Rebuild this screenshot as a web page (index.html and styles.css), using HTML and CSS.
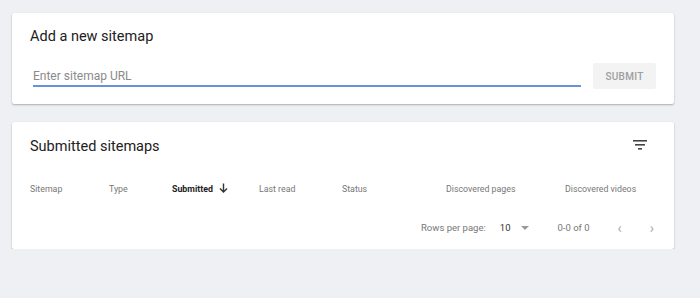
FILE: index.html
```html
<!DOCTYPE html>
<html lang="en">
<head>
  <meta charset="UTF-8">
  <title>Sitemaps</title>
  <link rel="stylesheet" href="styles.css">
</head>
<body>
  <div class="card add-card">
    <h2 class="card-title">Add a new sitemap</h2>
    <div class="add-row">
      <div class="url-field">
        <input class="url-input" type="text" placeholder="Enter sitemap URL">
      </div>
      <button class="submit-btn">SUBMIT</button>
    </div>
  </div>

  <div class="card list-card">
    <div class="list-head">
      <h2 class="card-title">Submitted sitemaps</h2>
      <svg class="filter-icon" width="14" height="10" viewBox="0 0 14 10">
        <rect x="0" y="0" width="14" height="1.6" fill="#444"/>
        <rect x="2" y="4" width="10" height="1.6" fill="#444"/>
        <rect x="5" y="8" width="4" height="1.6" fill="#444"/>
      </svg>
    </div>

    <div class="cols">
      <span class="col c-sitemap">Sitemap</span>
      <span class="col c-type">Type</span>
      <span class="col c-submitted active">Submitted
        <svg class="sort-arrow" width="9" height="10" viewBox="0 0 9 10">
          <path d="M4.5 0.5 V9 M1 5.5 L4.5 9 L8 5.5" stroke="#333" stroke-width="1.4" fill="none"/>
        </svg>
      </span>
      <span class="col c-lastread">Last read</span>
      <span class="col c-status">Status</span>
      <span class="col c-pages">Discovered pages</span>
      <span class="col c-videos">Discovered videos</span>
    </div>

    <div class="pager">
      <span class="rows-label">Rows per page:</span>
      <span class="rows-value">10</span>
      <span class="rows-caret"></span>
      <span class="range">0-0 of 0</span>
      <span class="nav">&lsaquo;</span>
      <span class="nav">&rsaquo;</span>
    </div>
  </div>
</body>
</html>
```

FILE: styles.css
```css
* { box-sizing: border-box; }
body {
  margin: 0;
  padding: 13px 0 0 12px;
  background: #eef0f4;
  font-family: Roboto, 'Liberation Sans', sans-serif;
  color: #222;
}
.card {
  width: 662px;
  background: #fff;
  border-radius: 2px;
  box-shadow: 0 1px 2px rgba(0, 0, 0, 0.28), 0 0 1px rgba(0, 0, 0, 0.08);
}
.card-title {
  margin: 0;
  font-size: 14.5px;
  font-weight: 400;
  color: #212121;
}

/* add a new sitemap */
.add-card {
  height: 91px;
  padding: 15px 18px 0 18px;
}
.add-row {
  display: flex;
  align-items: flex-end;
  margin-top: 18px;
}
.url-field {
  width: 548px;
  margin-left: 3px;
  border-bottom: 2px solid #6a92dc;
}
.url-input {
  display: block;
  width: 100%;
  padding: 0 0 2px 0;
  border: none;
  background: transparent;
  font-family: inherit;
  font-size: 12px;
  outline: none;
}
.url-input::placeholder { color: #8a8a8a; }
.submit-btn {
  margin: 0 0 -2px 12px;
  width: 63px;
  height: 26px;
  border: none;
  border-radius: 2px;
  background: #f3f3f3;
  color: #9e9e9e;
  font-family: inherit;
  font-size: 10px;
  font-weight: 500;
  letter-spacing: 0.3px;
}

/* submitted sitemaps */
.list-card {
  margin-top: 18px;
  height: 127px;
  padding: 0 18px;
}
.list-head {
  display: flex;
  align-items: center;
  justify-content: space-between;
  height: 46px;
  padding-top: 2px;
}
.filter-icon { margin-right: 9px; margin-top: -3px; }
.cols {
  display: flex;
  align-items: center;
  height: 40px;
  padding-top: 2px;
  font-size: 8.8px;
  color: #777;
}
.col { flex: none; }
.c-sitemap { width: 79px; }
.c-type { width: 63px; }
.c-submitted { width: 87px; color: #222; font-weight: 700; display: flex; align-items: center; }
.sort-arrow { margin-left: 6px; margin-top: -3px; }
.c-lastread { width: 83px; }
.c-status { width: 104px; }
.c-pages { width: 119px; }
.pager {
  display: flex;
  align-items: center;
  justify-content: flex-end;
  height: 36px;
  padding: 3px 2px 0 0;
  font-size: 9.5px;
  color: #777;
}
.rows-label { margin-right: 14px; }
.rows-value { color: #333; }
.rows-caret {
  width: 0;
  height: 0;
  margin-left: 11px;
  border-left: 4px solid transparent;
  border-right: 4px solid transparent;
  border-top: 4px solid #999;
}
.range { margin-left: 28px; }
.nav {
  margin-left: 28px;
  font-size: 14px;
  color: #aaa;
}
```
